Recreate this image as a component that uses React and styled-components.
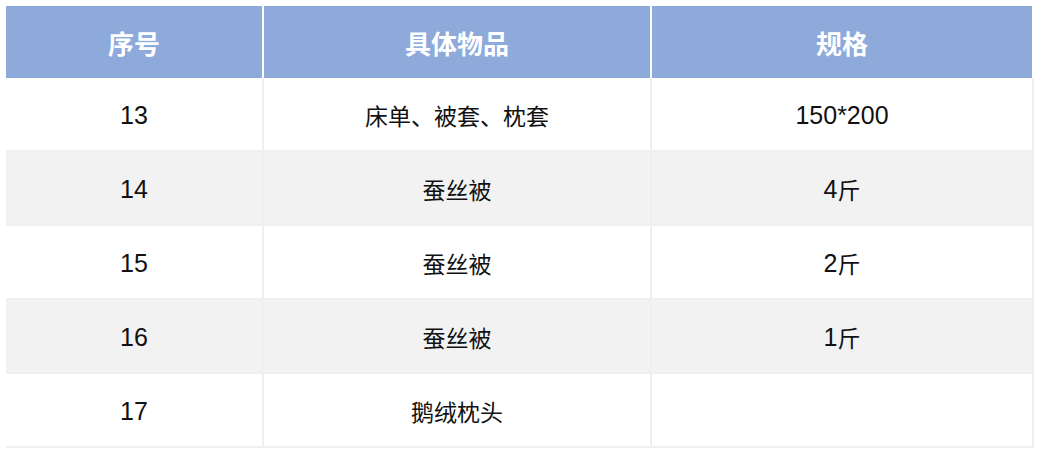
import React from 'react';
import styled, { createGlobalStyle } from 'styled-components';

const GlobalStyle = createGlobalStyle`
  html, body {
    margin: 0;
    padding: 0;
    background: #fff;
  }
  body {
    font-family: 'Liberation Sans', 'Noto Sans CJK SC', sans-serif;
  }
`;

const Page = styled.div`
  padding: 6px;
`;

const Table = styled.div`
  width: 1028px;
  display: flex;
  flex-direction: column;
`;

const Row = styled.div`
  display: grid;
  grid-template-columns: 258px 388px 382px;
  background: ${(p) => (p.$shaded ? '#f2f2f2' : '#ffffff')};
`;

const HeadCell = styled.div`
  box-sizing: border-box;
  height: 72px;
  background: #8eaadb;
  border-right: 2px solid #ffffff;
  color: #ffffff;
  font-weight: 700;
  font-size: 26px;
  display: flex;
  align-items: center;
  justify-content: center;
  padding-top: 1px;
`;

const Cell = styled.div`
  box-sizing: border-box;
  height: 74px;
  border-right: 2px solid #efefef;
  border-bottom: 2px solid #efefef;
  color: #111;
  font-size: 23px;
  display: flex;
  align-items: center;
  justify-content: center;
  padding-top: 2px;
`;

// latin runs (digits, *) read a touch larger than the CJK glyphs
const Latin = styled.span`
  font-size: 25px;
`;

const rows = [
  { no: '13', item: '床单、被套、枕套', spec: '150*200' },
  { no: '14', item: '蚕丝被', spec: '4斤' },
  { no: '15', item: '蚕丝被', spec: '2斤' },
  { no: '16', item: '蚕丝被', spec: '1斤' },
  { no: '17', item: '鹅绒枕头', spec: '' },
];

const Text = ({ value }) =>
  value
    .split(/([0-9*]+)/)
    .filter(Boolean)
    .map((part, i) =>
      /^[0-9*]+$/.test(part) ? <Latin key={i}>{part}</Latin> : <span key={i}>{part}</span>
    );

export default function App() {
  return (
    <Page>
      <GlobalStyle />
      <Table>
        <Row>
          <HeadCell>序号</HeadCell>
          <HeadCell>具体物品</HeadCell>
          <HeadCell>规格</HeadCell>
        </Row>
        {rows.map((r, i) => (
          <Row key={r.no} $shaded={i % 2 === 1}>
            <Cell><Text value={r.no} /></Cell>
            <Cell><Text value={r.item} /></Cell>
            <Cell><Text value={r.spec} /></Cell>
          </Row>
        ))}
      </Table>
    </Page>
  );
}
